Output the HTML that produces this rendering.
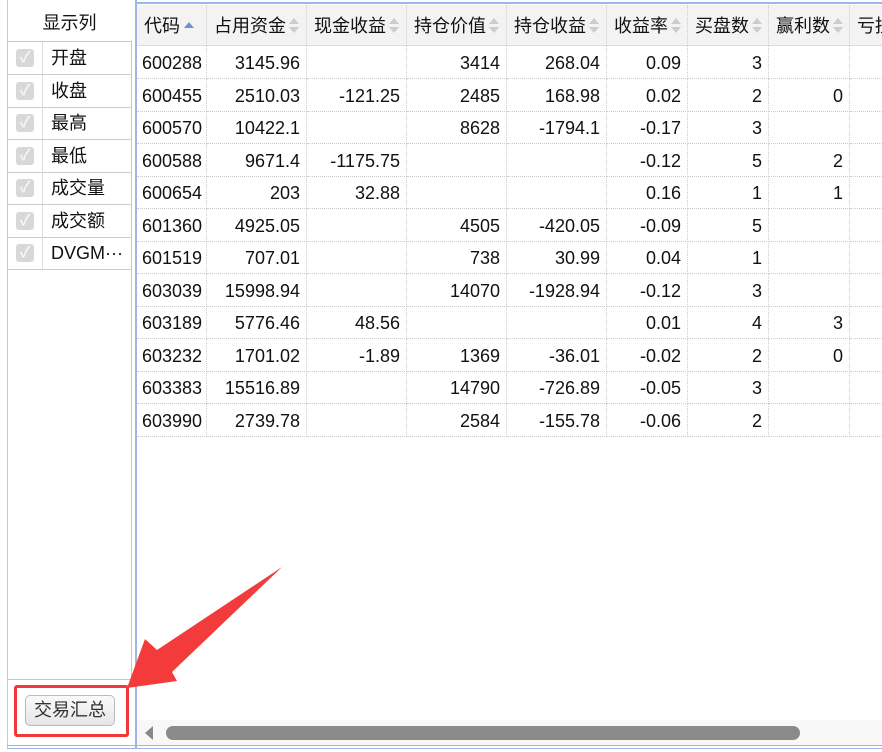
<!DOCTYPE html>
<html><head><meta charset="utf-8"><style>
*{margin:0;padding:0;box-sizing:border-box}
body{width:882px;height:752px;overflow:hidden;background:#fff;font-family:"Liberation Sans","Noto Sans CJK SC",sans-serif;font-size:18px;color:#111;position:relative}
.a{position:absolute}
.hd{position:absolute;top:5px;height:41px;background:#f3f3f3;border-right:1px dotted #ccc;border-bottom:1px solid #ddd;line-height:42px;padding-left:7px;white-space:nowrap;overflow:hidden}
.c{position:absolute;height:33px;line-height:34px;border-right:1px dotted #ccc;border-bottom:1px dotted #ccc;text-align:right;padding-right:6px;white-space:nowrap}
.si{display:inline-block;width:11px;height:18px;vertical-align:-3px;margin-left:3px;position:relative}
.si:before{content:"";position:absolute;left:0;top:1px;border:5.5px solid transparent;border-bottom:6px solid #ccc;border-top:0}
.si:after{content:"";position:absolute;left:0;top:10px;border:5.5px solid transparent;border-top:6px solid #ccc;border-bottom:0}
.it{position:absolute;left:8px;width:123px;height:33px;border-bottom:1px solid #ccc;line-height:33px}
.cb{position:absolute;left:8px;top:7px;width:18px;height:18px;background:#d8d8d8;border-radius:3px;color:#f6f6f6;font-size:15px;line-height:18px;text-align:center;font-weight:bold}
.lb{position:absolute;left:34px;top:0;height:32px;border-left:1px solid #ddd;padding-left:8px}
</style></head><body>
<div class="a" style="left:7px;top:0;width:1px;height:748px;background:#bccbe6"></div>
<div class="a" style="left:135px;top:0;width:2px;height:748px;background:#9bb6e8"></div>
<div class="a" style="left:137px;top:2px;width:745px;height:2px;background:#9bb6e8"></div>
<div class="a" style="left:7px;top:745px;width:875px;height:1px;background:#9bb6e8"></div>
<div class="a" style="left:7px;top:748px;width:875px;height:1px;background:#9bb6e8"></div>
<div class="a" style="left:8px;top:9px;width:123px;text-align:center;line-height:28px">显示列</div>
<div class="a" style="left:7px;top:41px;width:125px;height:639px;border:1px solid #b7c8e8"></div>
<div class="it" style="top:42px"><div class="cb">✓</div><div class="lb">开盘</div></div>
<div class="it" style="top:75px"><div class="cb">✓</div><div class="lb">收盘</div></div>
<div class="it" style="top:107px"><div class="cb">✓</div><div class="lb">最高</div></div>
<div class="it" style="top:140px"><div class="cb">✓</div><div class="lb">最低</div></div>
<div class="it" style="top:172px"><div class="cb">✓</div><div class="lb">成交量</div></div>
<div class="it" style="top:205px"><div class="cb">✓</div><div class="lb">成交额</div></div>
<div class="it" style="top:237px"><div class="cb">✓</div><div class="lb">DVGM···</div></div>
<div class="a" style="left:25px;top:695px;width:90px;height:31px;border:1px solid #bbb;border-radius:5px;background:linear-gradient(#fafafa,#e6e6e6);text-align:center;line-height:29px;color:#333">交易汇总</div>
<div class="a" style="left:14px;top:685px;width:115px;height:52px;border:3px solid #f03a3a;border-radius:3px"></div>

<div class="hd" style="left:137px;width:70px">代码<span style="display:inline-block;margin-left:4px;border:5.5px solid transparent;border-bottom:6px solid #6b94d6;border-top:0;vertical-align:4px"></span></div>
<div class="hd" style="left:207px;width:100px">占用资金<span class="si"></span></div>
<div class="hd" style="left:307px;width:100px">现金收益<span class="si"></span></div>
<div class="hd" style="left:407px;width:100px">持仓价值<span class="si"></span></div>
<div class="hd" style="left:507px;width:100px">持仓收益<span class="si"></span></div>
<div class="hd" style="left:607px;width:81px">收益率<span class="si"></span></div>
<div class="hd" style="left:688px;width:81px">买盘数<span class="si"></span></div>
<div class="hd" style="left:769px;width:81px">赢利数<span class="si"></span></div>
<div class="hd" style="left:850px;width:40px">亏损</div>
<div id="rows"></div>
<script>
var d=[["600288","3145.96","","3414","268.04","0.09","3",""],["600455","2510.03","-121.25","2485","168.98","0.02","2","0"],["600570","10422.1","","8628","-1794.1","-0.17","3",""],["600588","9671.4","-1175.75","","","-0.12","5","2"],["600654","203","32.88","","","0.16","1","1"],["601360","4925.05","","4505","-420.05","-0.09","5",""],["601519","707.01","","738","30.99","0.04","1",""],["603039","15998.94","","14070","-1928.94","-0.12","3",""],["603189","5776.46","48.56","","","0.01","4","3"],["603232","1701.02","-1.89","1369","-36.01","-0.02","2","0"],["603383","15516.89","","14790","-726.89","-0.05","3",""],["603990","2739.78","","2584","-155.78","-0.06","2",""]];
var L=[137,207,307,407,507,607,688,769,850],h="";
d.forEach(function(r,i){var t=Math.round(46+i*32.5);r.push("");for(var j=0;j<9;j++){var w=(j<8?L[j+1]:890)-L[j];h+='<div class="c" style="top:'+t+'px;left:'+L[j]+'px;width:'+w+'px;'+(j==0?'text-align:left;padding-left:5px':'')+'">'+r[j]+'</div>';}});
document.getElementById("rows").innerHTML=h;
</script>
<div class="a" style="left:137px;top:720px;width:745px;height:25px;background:#f8f8f8"></div>
<div class="a" style="left:145px;top:726px;border:7px solid transparent;border-right:8px solid #888;border-left:0"></div>
<div class="a" style="left:166px;top:726px;width:634px;height:14px;background:#8a8a8a;border-radius:7px"></div>
<svg class="a" style="left:0;top:0" width="882" height="752"><polygon points="127,688 145,639 157,650 282,567 172,672 177,681" fill="#f33b3b"/></svg>
</body></html>
